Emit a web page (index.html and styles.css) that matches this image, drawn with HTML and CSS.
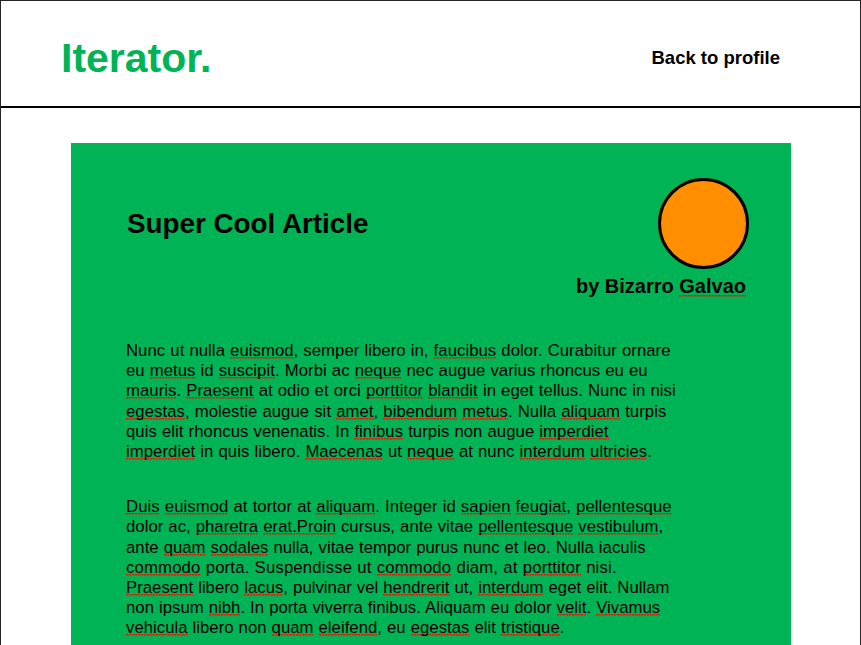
FILE: index.html
```html
<!DOCTYPE html>
<html lang="en">
<head>
<meta charset="utf-8">
<title>Iterator.</title>
<link rel="stylesheet" href="styles.css">
</head>
<body>
<div class="page">
<header class="header">
<a class="logo">Iterator.</a>
<a class="back">Back to profile</a>
</header>
<main class="article">
<div class="intro">
<h1 class="title">Super Cool Article</h1>
<div class="author">
<div class="avatar"></div>
<div class="byline">by Bizarro <u>Galvao</u></div>
</div>
</div>
<p class="text">
<span class="line">Nunc ut nulla <u>euismod</u>, semper libero in, <u>faucibus</u> dolor. Curabitur ornare</span>
<span class="line">eu <u>metus</u> id <u>suscipit</u>. Morbi ac <u>neque</u> nec augue varius rhoncus eu eu</span>
<span class="line"><u>mauris</u>. <u>Praesent</u> at odio et orci <u>porttitor</u> <u>blandit</u> in eget tellus. Nunc in nisi</span>
<span class="line"><u>egestas</u>, molestie augue sit <u>amet</u>, <u>bibendum</u> <u>metus</u>. Nulla <u>aliquam</u> turpis</span>
<span class="line">quis elit rhoncus venenatis. In <u>finibus</u> turpis non augue <u>imperdiet</u></span>
<span class="line"><u>imperdiet</u> in quis libero. <u>Maecenas</u> ut <u>neque</u> at nunc <u>interdum</u> <u>ultricies</u>.</span>
</p>
<p class="text text-tight">
<span class="line line-wide"><u>Duis</u> <u>euismod</u> at tortor at <u>aliquam</u>. Integer id <u>sapien</u> <u>feugiat</u>, <u>pellentesque</u></span>
<span class="line">dolor ac, <u>pharetra</u> <u>erat.Proin</u> cursus, ante vitae <u>pellentesque</u> <u>vestibulum</u>,</span>
<span class="line">ante <u>quam</u> <u>sodales</u> nulla, vitae tempor purus nunc et leo. Nulla iaculis</span>
<span class="line line-wider"><u>commodo</u> porta. Suspendisse ut <u>commodo</u> diam, at <u>porttitor</u> nisi.</span>
<span class="line"><u>Praesent</u> libero <u>lacus</u>, pulvinar vel <u>hendrerit</u> ut, <u>interdum</u> eget elit. Nullam</span>
<span class="line">non ipsum <u>nibh</u>. In porta viverra finibus. Aliquam eu dolor <u>velit</u>. <u>Vivamus</u></span>
<span class="line"><u>vehicula</u> libero non <u>quam</u> <u>eleifend</u>, eu <u>egestas</u> elit <u>tristique</u>.</span>
</p>
</main>
</div>
</body>
</html>
```
FILE: styles.css
```css
* {
  box-sizing: border-box;
}

body {
  margin: 0;
  background: #fff;
  color: #000;
  font-family: "Liberation Sans", Helvetica, Arial, sans-serif;
}

.page {
  height: 645px;
  overflow: hidden;
  border: 1px solid #262626;
  border-bottom: 0;
}

.header {
  display: flex;
  justify-content: space-between;
  align-items: center;
  height: 107px;
  padding: 9px 80px 0 60px;
  border-bottom: 2px solid #000;
  font-weight: bold;
}

.logo {
  color: #00b354;
  font-size: 41px;
  line-height: 48px;
}

.back {
  font-size: 18.5px;
  line-height: 22px;
}

.article {
  width: 720px;
  height: 520px;
  margin: 35px 0 0 70px;
  padding: 35px 42px 0 55px;
  background: #00b354;
}

.intro {
  display: flex;
  justify-content: space-between;
  height: 163px;
}

.title {
  margin: 29px 0 0 1px;
  font-size: 27.8px;
  line-height: 34px;
  white-space: nowrap;
}

.author {
  display: flex;
  flex-direction: column;
  align-items: flex-end;
}

.avatar {
  width: 91px;
  height: 91px;
  border: 3px solid #000;
  border-radius: 50%;
  background: #ff8f00;
}

.byline {
  margin: 5px 3px 0 0;
  font-size: 20px;
  font-weight: bold;
  line-height: 24px;
  white-space: nowrap;
}

.text {
  margin: 0 0 35px;
  font-size: 16.7px;
  line-height: 20.2px;
  letter-spacing: 0.067px;
  word-spacing: 0.35px;
}

.text-tight {
  letter-spacing: 0.038px;
}

.line {
  display: block;
  white-space: nowrap;
}

.line-wide {
  letter-spacing: 0.08px;
}

.line-wider {
  letter-spacing: 0.18px;
}

u {
  padding-bottom: 1px;
  text-decoration: none;
  background: repeating-linear-gradient(90deg, #e11b12 0 2px, #55801f 2px 3px) 0 16px / 100% 1.5px no-repeat;
}

.byline u {
  background-position: 0 20px;
}
```
